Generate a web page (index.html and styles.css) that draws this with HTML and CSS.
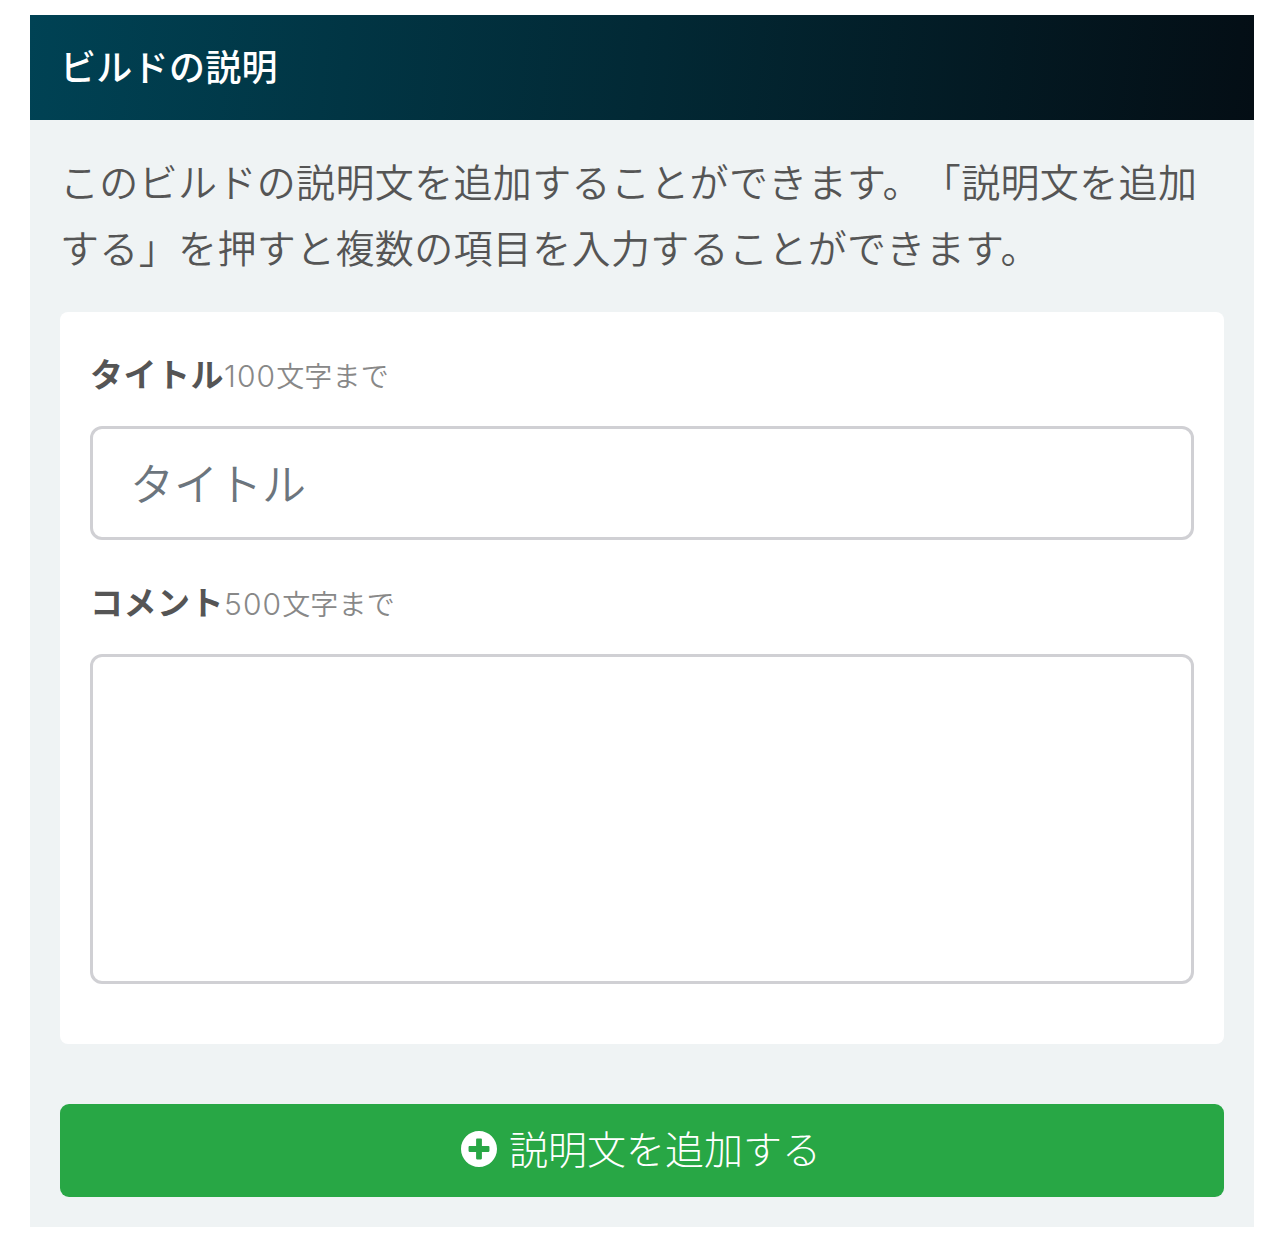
FILE: index.html
```html
<!DOCTYPE html>
<html lang="ja">
<head>
    <meta charset="UTF-8">
    <meta name="viewport" content="width=device-width, initial-scale=1.0">
    <title>ビルドの説明</title>
    <link rel="stylesheet" href="styles.css">
</head>
<body>
    <section class="build-section">
        <h2 class="section-title">ビルドの説明</h2>
        <div class="section-body">
            <p class="lead">このビルドの説明文を追加することができます。「説明文を追加<br>する」を押すと複数の項目を入力することができます。</p>

            <div class="form-box">
                <label class="form-label" for="title"><span class="label-name">タイトル</span><span class="note"><span class="num">100</span>文字まで</span></label>
                <input type="text" id="title" class="form-control" placeholder="タイトル">
                <label class="form-label" for="comment"><span class="label-name">コメント</span><span class="note"><span class="num">500</span>文字まで</span></label>
                <textarea id="comment" class="form-control comment"></textarea>
            </div>

            <button type="button" class="btn-add">
                <svg class="icon-plus" viewBox="8 8 496 496" aria-hidden="true">
                    <path fill="currentColor" d="M256 8C119 8 8 119 8 256s111 248 248 248 248-111 248-248S393 8 256 8zm144 276c0 6.600-5.400 12-12 12h-92v92c0 6.600-5.400 12-12 12h-56c-6.600 0-12-5.400-12-12v-92h-92c-6.600 0-12-5.400-12-12v-56c0-6.600 5.400-12 12-12h92v-92c0-6.600 5.400-12 12-12h56c6.600 0 12 5.400 12 12v92h92c6.600 0 12 5.400 12 12v56z"/>
                </svg>
                <span class="btn-text">説明文を追加する</span>
            </button>
        </div>
    </section>
</body>
</html>
```
FILE: styles.css
```css
* {
    box-sizing: border-box;
}
body {
    margin: 0;
    padding: 15px 30px 25px;
    background: #fff;
    color: #555;
    font-family: "Noto Sans CJK JP", sans-serif;
    text-spacing-trim: space-all;
}
.build-section {
    background: #eff3f4;
}
.section-title {
    height: 105px;
    margin: 0;
    padding: 0 30px;
    background: linear-gradient(95deg, #004254 0%, #022935 50%, #040e15 100%);
    color: #fff;
    font-size: 36px;
    font-weight: 500;
    letter-spacing: 0.3px;
    line-height: 101px;
}
.section-body {
    padding: 27px 30px 30px;
}
.lead {
    height: 132px;
    margin: 0 0 33px;
    font-size: 39px;
    font-weight: 350;
    letter-spacing: 0.35px;
    line-height: 66px;
    white-space: nowrap;
}
.form-box {
    height: 732px;
    padding: 28px 30px 30px;
    border-radius: 8px;
    background: #fff;
}
.form-label {
    display: flex;
    align-items: baseline;
    height: 86px;
    line-height: 66px;
}
.label-name {
    font-size: 33px;
    font-weight: 700;
    letter-spacing: 0.5px;
}
.note {
    color: #888;
    font-size: 28px;
    font-weight: 350;
    letter-spacing: 0.2px;
}
.num {
    font-family: Inter, sans-serif;
    font-size: 30px;
    font-weight: 300;
    letter-spacing: 1.1px;
}
.form-control {
    display: block;
    width: 100%;
    height: 114px;
    margin: 0 0 28px;
    padding: 0 37px 3px;
    border: 3px solid #d0d0d4;
    border-radius: 12px;
    background: #fff;
    color: #495057;
    font-family: inherit;
    font-size: 44px;
    font-weight: 350;
    outline: none;
}
.form-control::placeholder {
    color: #6c757d;
    opacity: 1;
}
.comment {
    height: 330px;
    padding: 20px 37px;
    resize: none;
}
.btn-add {
    display: flex;
    align-items: center;
    justify-content: center;
    gap: 12px;
    width: 100%;
    height: 93px;
    margin-top: 60px;
    padding: 0 2px 4px 0;
    border: 0;
    border-radius: 9px;
    background: #28a745;
    color: #fff;
    font-family: inherit;
    font-size: 39px;
    font-weight: 300;
    cursor: pointer;
}
.icon-plus {
    width: 36px;
    height: 36px;
}
.btn-text {
    padding-bottom: 3px;
    line-height: 60px;
}
```
